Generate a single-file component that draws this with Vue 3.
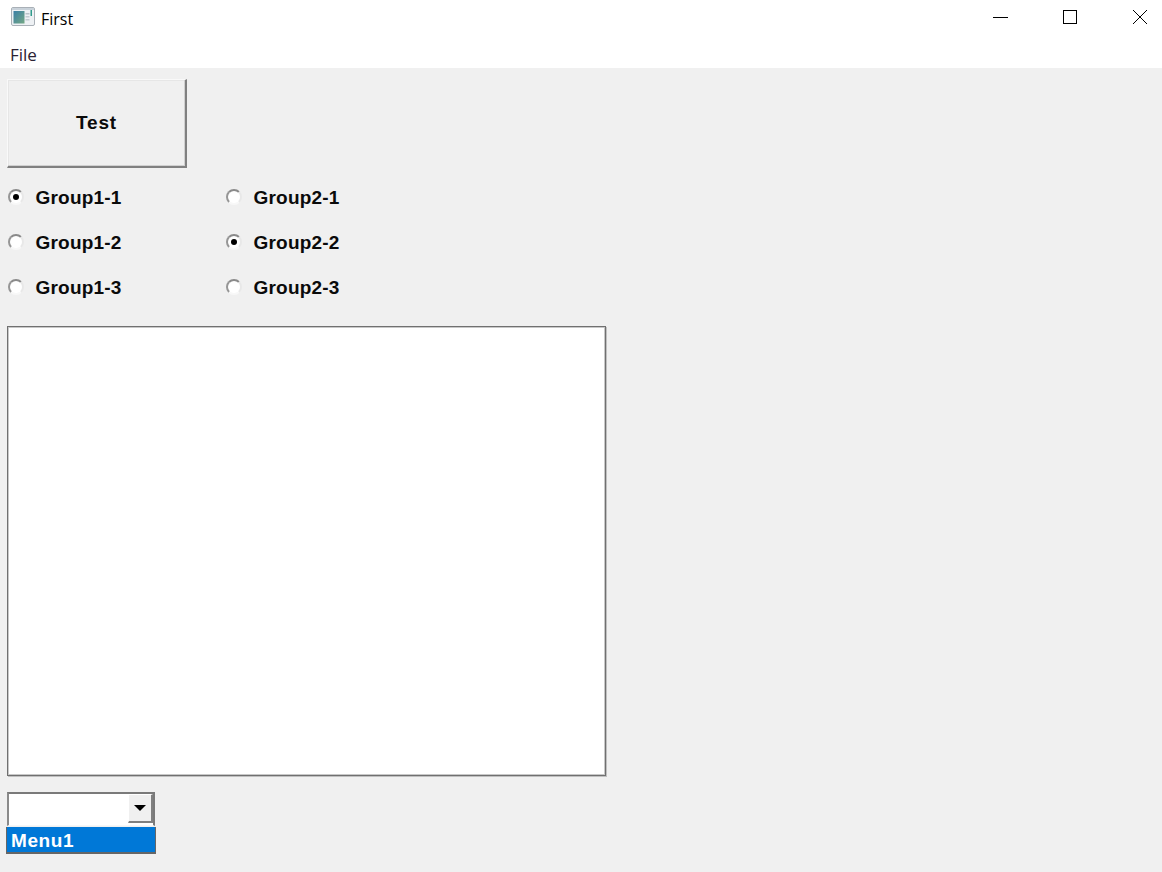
<script setup>
const groups = [
  [{ label: 'Group1-1', on: true }, { label: 'Group1-2', on: false }, { label: 'Group1-3', on: false }],
  [{ label: 'Group2-1', on: false }, { label: 'Group2-2', on: true }, { label: 'Group2-3', on: false }],
]
</script>

<template>
  <div class="window">
    <header class="titlebar">
      <svg class="app-icon" width="24" height="20" viewBox="0 0 24 20">
        <defs>
          <linearGradient id="pane" x1="0" y1="0" x2="1" y2="1">
            <stop offset="0" stop-color="#3a7fa6" />
            <stop offset="1" stop-color="#74a884" />
          </linearGradient>
        </defs>
        <rect x="0.5" y="0.5" width="23" height="18" rx="1.5" fill="#eef1f4" stroke="#a9b0b7" />
        <rect x="1" y="1" width="22" height="2" fill="#c9d2da" />
        <rect x="2.5" y="4" width="11" height="12.5" fill="url(#pane)" />
        <rect x="14.5" y="6" width="4" height="1.5" fill="#b9c2c8" />
        <rect x="14.5" y="9" width="4" height="1.5" fill="#c4ccd1" />
        <rect x="14.5" y="12" width="4" height="1.5" fill="#c4ccd1" />
        <rect x="19.5" y="3" width="1.5" height="6" fill="#2f9c8c" />
      </svg>
      <span class="title">First</span>
      <div class="caption">
        <button class="cap"><svg width="16" height="16" viewBox="0 0 16 16"><path d="M1 8.5h15" stroke="#000" fill="none" /></svg></button>
        <button class="cap"><svg width="16" height="16" viewBox="0 0 16 16"><rect x="1.5" y="1.5" width="13" height="13" stroke="#000" fill="none" /></svg></button>
        <button class="cap"><svg width="16" height="16" viewBox="0 0 16 16"><path d="M1 1l14 14M15 1L1 15" stroke="#000" fill="none" /></svg></button>
      </div>
    </header>

    <nav class="menubar"><span>File</span></nav>

    <main class="client">
      <button class="push">Test</button>

      <div class="radios">
        <div v-for="(group, i) in groups" :key="i" class="group">
          <label v-for="item in group" :key="item.label" class="radio">
            <span class="dot" :class="{ on: item.on }"></span>
            <span>{{ item.label }}</span>
          </label>
        </div>
      </div>

      <div class="listbox"></div>

      <div class="combo">
        <div class="combo-field"></div>
        <div class="combo-btn"><span class="arrow"></span></div>
      </div>
      <div class="dropdown">Menu1</div>
    </main>
  </div>
</template>

<style>
html, body { margin: 0; background: #f0f0f0; }
</style>

<style scoped>
.window {
  width: 1162px;
  height: 872px;
  display: flex;
  flex-direction: column;
  overflow: hidden;
  background: #f0f0f0;
  color: #000;
}
.titlebar {
  height: 37px;
  display: flex;
  align-items: center;
  background: #fff;
  padding-left: 11px;
  box-sizing: border-box;
}
.app-icon { margin-top: -4px; }
.title {
  margin-left: 6px;
  font: 16px "Open Sans", "Noto Sans", sans-serif;
}
.caption {
  margin-left: auto;
  padding-right: 14px;
  display: flex;
  gap: 54px;
  align-self: stretch;
}
.cap {
  width: 16px;
  padding: 0 0 3px;
  border: 0;
  background: transparent;
  display: flex;
  align-items: center;
  justify-content: center;
}
.menubar {
  height: 31px;
  background: #fff;
  padding-left: 10px;
  font: 17px "Open Sans", "Noto Sans", sans-serif;
  line-height: 36px;
  color: #2a2233;
}
.client {
  flex: 1;
  padding: 11px 0 0 7px;
  font: bold 19px "Liberation Sans", Arial, sans-serif;
  letter-spacing: 0.2px;
}
.push {
  display: flex;
  align-items: center;
  justify-content: center;
  box-sizing: border-box;
  width: 180px;
  height: 89px;
  padding: 0;
  background: #f0f0f0;
  border-style: solid;
  border-width: 1px 2px 2px 1px;
  border-color: #f9f9f9 #808080 #808080 #f9f9f9;
  box-shadow: inset -1px -1px 0 #d0d0d0, inset 1px 1px 0 #e6e6e6;
  font: inherit;
  letter-spacing: 0.8px;
  color: #0a0a0a;
}
.radios {
  display: flex;
  margin-top: 7px;
}
.group {
  width: 218px;
  display: flex;
  flex-direction: column;
}
.radio {
  height: 45px;
  display: flex;
  align-items: center;
  gap: 11.5px;
  padding-left: 1px;
  padding-bottom: 1px;
  box-sizing: border-box;
  color: #0a0a0a;
}
.radio > span:last-child {
  position: relative;
  top: 0.5px;
}
.dot {
  box-sizing: border-box;
  width: 16px;
  height: 16px;
  border-radius: 50%;
  background: #fff;
  border: 2px solid;
  border-color: #8a8a8a #e8e8e8 #f8f8f8 #969696;
  position: relative;
}
.dot.on::after {
  content: "";
  position: absolute;
  left: 3px;
  top: 3px;
  width: 6px;
  height: 6px;
  border-radius: 50%;
  background: #000;
}
.listbox {
  box-sizing: border-box;
  width: 599px;
  height: 450px;
  margin-top: 16px;
  background: #fff;
  border: 1px solid #707070;
  box-shadow: inset 1px 1px 0 #c8c8c8, inset -1px -1px 0 #c8c8c8, 1px 1px 0 #c0c0c0;
}
.combo {
  box-sizing: border-box;
  width: 148px;
  height: 34px;
  margin-top: 16px;
  display: flex;
  background: #fff;
  border-style: solid;
  border-width: 2px 2px 1px 2px;
  border-color: #7a7a7a #7a7a7a #f7f7f7 #8a8a8a;
}
.combo-field { flex: 1; }
.combo-btn {
  box-sizing: border-box;
  width: 25px;
  height: 29px;
  background: #f0f0f0;
  border-right: 2px solid #808080;
  border-bottom: 2px solid #808080;
  border-left: 1px solid #fff;
  border-top: 1px solid #fff;
  display: flex;
  align-items: center;
  justify-content: center;
}
.arrow {
  width: 0;
  height: 0;
  border-left: 6px solid transparent;
  border-right: 6px solid transparent;
  border-top: 6px solid #000;
}
.dropdown {
  box-sizing: border-box;
  width: 150px;
  height: 27px;
  margin-left: -1px;
  margin-top: 1px;
  padding-left: 4px;
  background: #0078d7;
  border-bottom: 2px solid #666;
  border-left: 1px solid #666;
  border-right: 1px solid #666;
  color: #fff;
  line-height: 27px;
  letter-spacing: 0.6px;
}
</style>
